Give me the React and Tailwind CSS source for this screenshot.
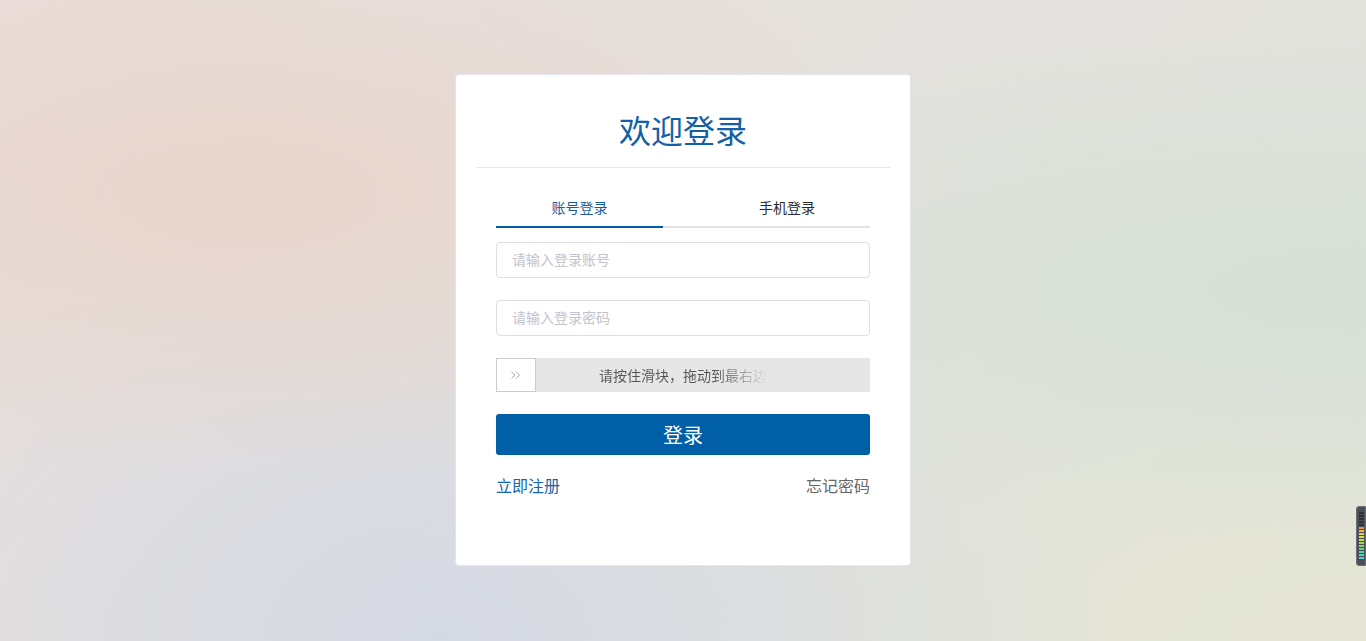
import React from "react";

export default function App() {
  const font = { fontFamily: '"Noto Sans CJK SC", "Noto Sans", sans-serif' };
  return (
    <div
      style={font}
      className="relative w-full h-[641px] overflow-hidden flex justify-center items-start pt-[74px] bg-[radial-gradient(ellipse_at_18%_30%,#e8d5cc_0%,rgba(232,213,204,0)_45%),radial-gradient(ellipse_at_100%_45%,#d6e0d6_0%,rgba(214,224,214,0)_50%),radial-gradient(ellipse_at_32%_100%,#d5d9e3_0%,rgba(213,217,227,0)_50%),radial-gradient(ellipse_at_100%_100%,#e5e6d4_0%,rgba(229,230,212,0)_40%),linear-gradient(135deg,#e9dedb_0%,#e3e1dd_50%,#dfe2dc_100%)]"
    >
      <div className="w-[456px] h-[492px] bg-white rounded-[4px] border border-[#e3e6f0] flex flex-col pt-[34px]">
        <h1 className="text-center text-[32px] leading-[40px] text-[#1460a6] font-normal">欢迎登录</h1>
        <div className="mx-[20px] mt-[18px] h-px bg-[#e4e7ee]" />

        <div className="w-[374px] mx-auto mt-[29px]">
          <div className="flex border-b-2 border-[#dfe2e9]">
            <div className="w-[167px] -mb-[2px] border-b-2 border-[#005fa8] flex justify-center pb-[9px] text-[14px] leading-[20px] text-[#1b5e9f]">
              账号登录
            </div>
            <div className="flex-1 flex justify-center pl-[41px] pb-[9px] text-[14px] leading-[20px] text-[#2b2b2b]">
              手机登录
            </div>
          </div>

          <div className="mt-[14px] h-[36px] rounded-[4px] border border-[#dcdfe6] flex items-center px-[15px] pb-[2px] text-[14px] text-[#c0c4cc]">
            请输入登录账号
          </div>
          <div className="mt-[22px] h-[36px] rounded-[4px] border border-[#dcdfe6] flex items-center px-[15px] pb-[2px] text-[14px] text-[#c0c4cc]">
            请输入登录密码
          </div>

          <div className="mt-[22px] h-[34px] bg-[#e6e6e6] flex items-stretch relative">
            <div className="w-[40px] bg-white border border-[#cccccc] flex items-center justify-center">
              <svg width="12" height="10" viewBox="0 0 12 10" fill="none" stroke="#a9b0c4" strokeWidth="1">
                <path d="M1.5 1.5 L5 5 L1.5 8.5" />
                <path d="M6 1.5 L9.5 5 L6 8.5" />
              </svg>
            </div>
            <div className="absolute inset-0 flex items-center justify-center pb-[1px] pointer-events-none">
              <span className="text-[14px] leading-[20px] bg-[linear-gradient(to_right,#555555_0%,#555555_68%,#9a9a9a_84%,#e0e0e0_100%)] bg-clip-text text-transparent">
                请按住滑块，拖动到最右边
              </span>
            </div>
          </div>

          <button className="mt-[22px] w-full h-[41px] rounded-[3px] bg-[#005fa7] text-white text-[20px] leading-[28px] flex items-center justify-center">
            登录
          </button>

          <div className="mt-[18px] flex justify-between text-[16px] leading-[24px]">
            <span className="text-[#1565a8]">立即注册</span>
            <span className="text-[#666666]">忘记密码</span>
          </div>
        </div>
      </div>

      <div className="absolute right-0 top-[506px] w-[10px] h-[60px] rounded-l-[3px] bg-[#4b4f58] border border-[#6a6e77] flex flex-col gap-[1px] pl-[2px] pt-[5px]">
        {["#2e3138","#2e3138","#2e3138","#2e3138","#2e3138","#f0913a","#f0b93a","#e8d33a","#d8e03c","#c0e041","#a0dc4c","#7fd862","#5fd682","#4fd6a3","#48d8c4","#44d6d8"].map((c, i) => (
          <div key={i} className="w-[5px] h-[2px]" style={{ backgroundColor: c }} />
        ))}
      </div>
    </div>
  );
}
